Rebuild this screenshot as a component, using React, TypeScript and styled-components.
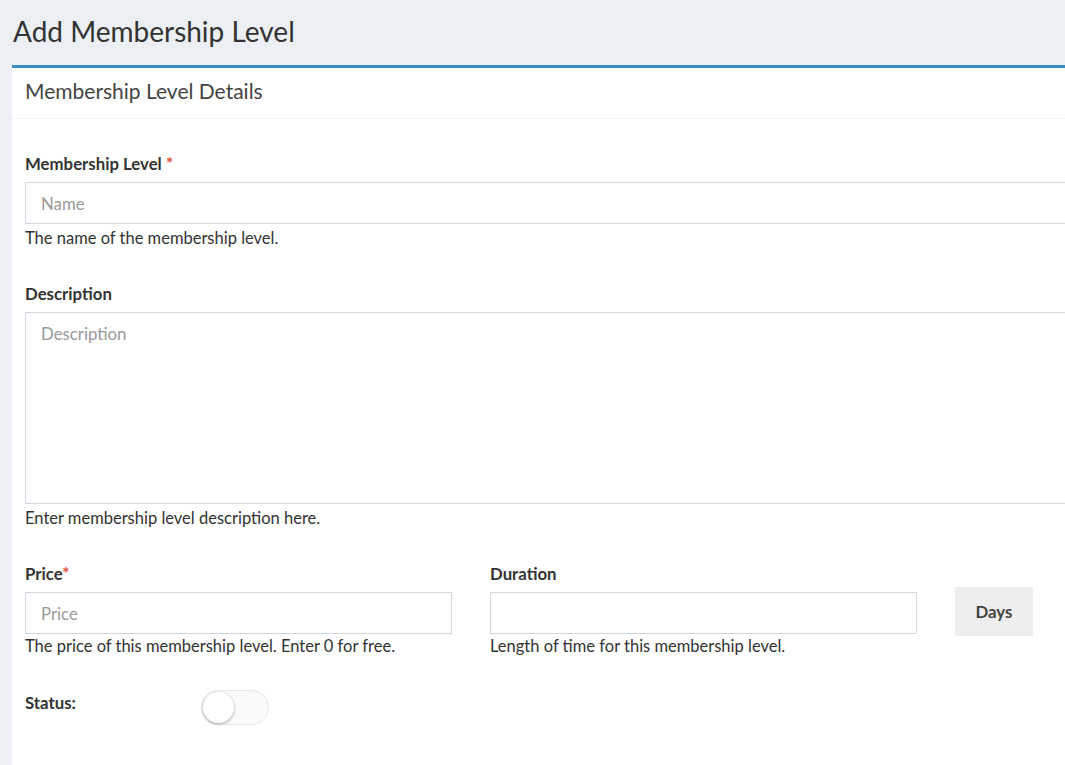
import React from "react";
import styled, { createGlobalStyle } from "styled-components";

const Global = createGlobalStyle`
  html, body {
    margin: 0;
    padding: 0;
    background: #ecf0f5;
    overflow: hidden;
  }
  body {
    font-family: Lato, "Noto Sans", Arial, sans-serif;
    color: #333;
  }
  * { box-sizing: border-box; }
`;

const Page = styled.div`
  width: 1065px;
  height: 765px;
  overflow: hidden;
`;

const ContentHeader = styled.div`
  height: 65px;
  padding: 14px 13px 0;
`;

const Title = styled.h1`
  margin: 0;
  font-size: 28px;
  line-height: 34px;
  font-weight: 400;
  color: #333;
`;

const Box = styled.section`
  margin-left: 12px;
  width: 1100px;
  background: #fff;
  border-top: 3px solid #3c8dbc;
  min-height: 700px;
`;

const BoxHeader = styled.div`
  height: 51px;
  padding: 0 13px 5px;
  display: flex;
  align-items: center;
  border-bottom: 1px solid #f4f4f4;
`;

const BoxTitle = styled.h3`
  margin: 0;
  font-size: 21px;
  line-height: 26px;
  font-weight: 400;
  color: #444;
`;

const BoxBody = styled.div`
  padding: 35px 13px 0;
`;

const Field = styled.div<{ $gap?: number }>`
  margin-bottom: ${(p) => p.$gap ?? 36}px;
`;

const Label = styled.label`
  display: block;
  font-size: 16.8px;
  line-height: 20px;
  font-weight: 700;
  color: #333;
  margin-bottom: 8px;
`;

const Req = styled.span`
  color: #dd4b39;
`;

const Input = styled.input`
  display: block;
  width: 100%;
  height: 42px;
  padding: 0 15px;
  border: 1px solid #d2d6de;
  border-radius: 0;
  font-family: inherit;
  font-size: 16.8px;
  color: #555;
  outline: none;
  &::placeholder { color: #999; }
`;

const TextArea = styled.textarea`
  display: block;
  width: 100%;
  height: 192px;
  padding: 10px 15px;
  border: 1px solid #d2d6de;
  border-radius: 0;
  font-family: inherit;
  font-size: 16.8px;
  color: #555;
  resize: none;
  outline: none;
  &::placeholder { color: #999; }
`;

const Help = styled.p<{ $top?: number }>`
  margin: ${(p) => p.$top ?? 4}px 0 0;
  font-size: 16.5px;
  line-height: 20px;
  color: #333;
`;

const Row = styled.div`
  display: grid;
  grid-template-columns: 427px 427px 78px;
  column-gap: 38px;
  margin-bottom: 37px;
`;

const AddonButton = styled.button`
  margin-top: 23px;
  height: 49px;
  border: none;
  background: #eeeeee;
  font-family: inherit;
  font-size: 16.8px;
  font-weight: 700;
  color: #444;
`;

const StatusRow = styled.div`
  display: flex;
  align-items: flex-start;
`;

const StatusLabel = styled.span`
  width: 176px;
  font-size: 16.8px;
  line-height: 20px;
  font-weight: 700;
  color: #333;
`;

const Switch = styled.span`
  position: relative;
  display: inline-block;
  margin-top: -3px;
  width: 68px;
  height: 35px;
  border-radius: 18px;
  border: 1px solid #e6e6e6;
  background: #fafafa;
`;

const Knob = styled.span`
  position: absolute;
  left: 1px;
  top: 1px;
  width: 31px;
  height: 31px;
  border-radius: 50%;
  background: #fff;
  box-shadow: 0 1px 3px rgba(0, 0, 0, 0.35);
`;

export default function App() {
  return (
    <Page>
      <Global />
      <ContentHeader>
        <Title>Add Membership Level</Title>
      </ContentHeader>
      <Box>
        <BoxHeader>
          <BoxTitle>Membership Level Details</BoxTitle>
        </BoxHeader>
        <BoxBody>
          <Field>
            <Label>
              Membership Level <Req>*</Req>
            </Label>
            <Input placeholder="Name" />
            <Help>The name of the membership level.</Help>
          </Field>
          <Field>
            <Label>Description</Label>
            <TextArea placeholder="Description" />
            <Help>Enter membership level description here.</Help>
          </Field>
          <Row>
            <div>
              <Label>
                Price<Req>*</Req>
              </Label>
              <Input placeholder="Price" />
              <Help $top={2}>The price of this membership level. Enter 0 for free.</Help>
            </div>
            <div>
              <Label>Duration</Label>
              <Input />
              <Help $top={2}>Length of time for this membership level.</Help>
            </div>
            <AddonButton>Days</AddonButton>
          </Row>
          <StatusRow>
            <StatusLabel>Status:</StatusLabel>
            <Switch>
              <Knob />
            </Switch>
          </StatusRow>
        </BoxBody>
      </Box>
    </Page>
  );
}
